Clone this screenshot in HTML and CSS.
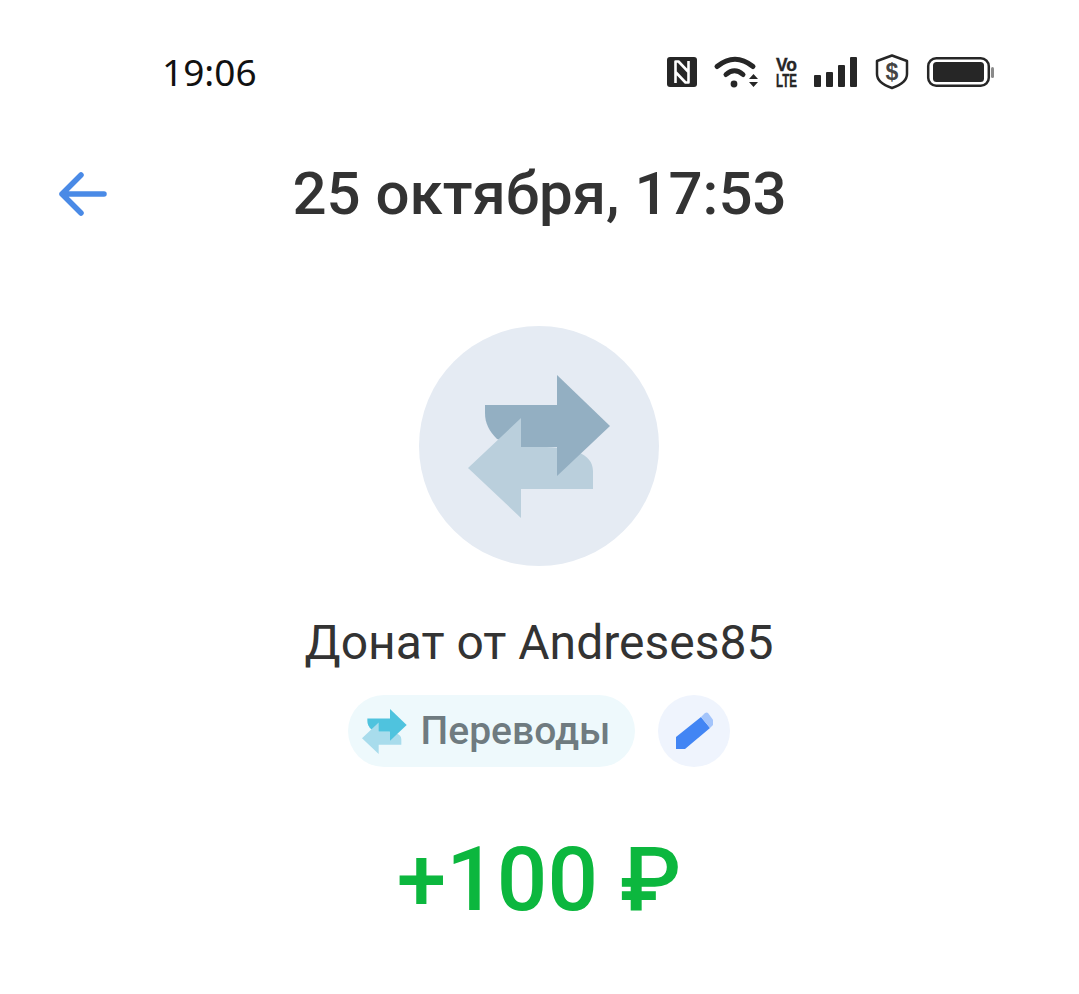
FILE: index.html
```html
<!doctype html>

<html lang="ru">
<head>
  <meta charset="utf-8">
  <title>Донат</title>
  <meta name="viewport" content="width=device-width, initial-scale=1.0">
  <link rel="stylesheet" href="styles.css">
</head>
<body>

  <div class="status">
    <span class="time">19:06</span>
    <svg class="status-icons" width="330" height="50" viewBox="666 48 330 50">
      <!-- nfc -->
      <rect x="667" y="57" width="30" height="30" rx="3" fill="#262626"/>
      <path d="M675.500 83V61.500h3l10 10.500M688.500 61v21.500h-3l-10-10.500" fill="none" stroke="#fff" stroke-width="2.600" stroke-linejoin="round"/>
      <!-- wifi -->
      <g fill="none" stroke="#262626" stroke-width="5" stroke-linecap="round">
        <path d="M717 66.500q18-14.500 36 0"/>
        <path d="M726 74.500q8.500-7.500 17 0"/>
      </g>
      <circle cx="734" cy="84" r="3.400" fill="#262626"/>
      <path d="M749 79l4.500-5 4.500 5zM749 82l4.500 5 4.500-5z" fill="#262626"/>
      <!-- volte -->
      <text class="volte">
        <tspan x="776" y="71" textLength="21" lengthAdjust="spacingAndGlyphs">Vo</tspan>
        <tspan x="776" y="87" textLength="21" lengthAdjust="spacingAndGlyphs">LTE</tspan>
      </text>
      <!-- signal -->
      <g fill="#262626">
        <rect x="814" y="75" width="7" height="12" rx="1"/>
        <rect x="826" y="72" width="7" height="15" rx="1"/>
        <rect x="838" y="65" width="7" height="22" rx="1"/>
        <rect x="850" y="57" width="7" height="30" rx="1"/>
      </g>
      <!-- shield -->
      <path d="M892 55.500l15 5.500v13q0 9-15 14q-15-5-15-14v-13z" fill="none" stroke="#262626" stroke-width="2.500" stroke-linejoin="round"/>
      <text class="dollar" x="892" y="80" text-anchor="middle">$</text>
      <!-- battery -->
      <rect x="928.200" y="58.200" width="60.600" height="27.600" rx="8" fill="none" stroke="#262626" stroke-width="2.500"/>
      <rect x="933" y="62" width="51" height="20" rx="3.500" fill="#262626"/>
      <rect x="991" y="67" width="3" height="11" rx="1.500" fill="#8a8a8a"/>
    </svg>
  </div>

  <header class="topbar">
    <svg class="back" width="50" height="50" viewBox="0 0 50 50">
      <path d="M46 25H4M23 6L4 25l19 19" fill="none" stroke="#4a8ae6" stroke-width="5.500" stroke-linecap="round" stroke-linejoin="round"/>
    </svg>
    <h1 class="date">25 октября, 17:53</h1>
  </header>

  <main class="details">
    <div class="avatar">
      <svg width="143" height="143" viewBox="468 374 143 143">
        <path d="M557 404H485v8c0 10 4 18 12 26l24 8h36z" fill="#93afc2"/>
        <path d="M521 446h20c30 0 52 6 52 24v18H521v29l-53-50 53-50z" fill="#bacfdc"/>
        <path d="M557 374l53 51-53 50z" fill="#93afc2"/>
      </svg>
    </div>

    <div class="name">Донат от Andreses85</div>

    <div class="tags">
      <div class="chip">
        <svg width="45" height="45" viewBox="468 374 143 143">
          <path d="M557 404H485v8c0 10 4 18 12 26l24 8h36z" fill="#4fc3de"/>
          <path d="M521 446h20c30 0 52 6 52 24v18H521v29l-53-50 53-50z" fill="#a8dcec"/>
          <path d="M557 374l53 51-53 50z" fill="#4fc3de"/>
        </svg>
        <span>Переводы</span>
      </div>
      <div class="edit">
        <svg width="38" height="38" viewBox="0 0 38 38">
          <path d="M1 25L26 5l9 11L10 37H1z" fill="#4285f4"/>
          <path d="M26 5l4-4q2-1 3 0l6 8q1 2 0 3l-4 4z" fill="#a3c4fb"/>
        </svg>
      </div>
    </div>

    <div class="amount">+100 ₽</div>
  </main>

</body>
</html>
```

FILE: styles.css
```css
html {
  height: 100%;
}

body {
  margin: 0;
  background-color: white;
  color: #333;
  font-family: Roboto, sans-serif;
}

.status {
  display: flex;
  justify-content: space-between;
  align-items: center;
  height: 50px;
  padding: 48px 83px 0 162px;
}

.time {
  margin-bottom: 4px;
  font-family: "Noto Sans", sans-serif;
  font-size: 37px;
  color: #111;
}

.volte {
  font-family: "Liberation Sans", sans-serif;
  font-size: 19px;
  font-weight: bold;
  fill: #262626;
  stroke: #262626;
  stroke-width: 0.4px;
}

.dollar {
  font-family: "Liberation Sans", sans-serif;
  font-size: 23px;
  font-weight: bold;
  fill: #444;
}

.topbar {
  display: grid;
  grid-template-columns: 1fr auto 1fr;
  align-items: center;
  height: 70px;
  margin-top: 60px;
  padding-left: 58px;
  padding-right: 58px;
}

.date {
  margin: 0;
  font-size: 60px;
  font-weight: 500;
}

.details {
  display: flex;
  flex-direction: column;
  align-items: center;
  padding-top: 98px;
  padding-right: 1px;
}

.avatar {
  display: flex;
  align-items: center;
  justify-content: center;
  width: 240px;
  height: 240px;
  border-radius: 50%;
  background-color: #e5ebf3;
}

.name {
  margin-top: 48px;
  font-size: 48px;
  line-height: 58px;
}

.tags {
  display: flex;
  gap: 23px;
  margin-top: 23px;
}

.chip {
  display: flex;
  align-items: center;
  gap: 14px;
  height: 72px;
  padding: 0 25px 0 14px;
  border-radius: 36px;
  background-color: #eef9fc;
  color: #6f7b80;
  font-size: 39px;
  font-weight: 500;
}

.edit {
  display: flex;
  align-items: center;
  justify-content: center;
  width: 72px;
  height: 72px;
  border-radius: 50%;
  background-color: #eff4fd;
}

.amount {
  margin-top: 57px;
  font-size: 89px;
  line-height: 112px;
  font-weight: 500;
  color: #0cb73e;
}
```
